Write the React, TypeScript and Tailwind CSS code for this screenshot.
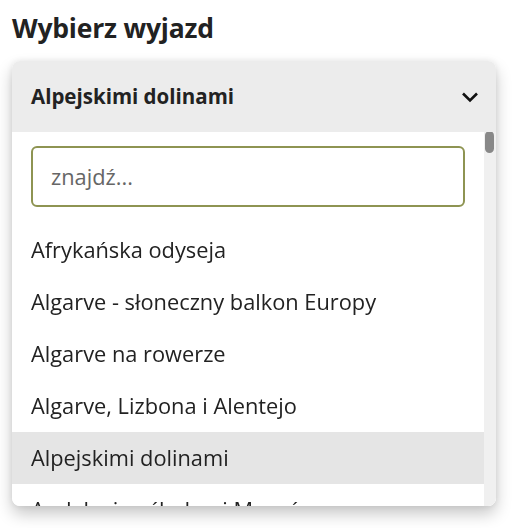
import { useState } from "react";

const trips = [
  "Afrykańska odyseja",
  "Algarve - słoneczny balkon Europy",
  "Algarve na rowerze",
  "Algarve, Lizbona i Alentejo",
  "Alpejskimi dolinami",
  "Andaluzja - śladami Maurów",
];

export default function App() {
  const [query, setQuery] = useState("");
  const selected = "Alpejskimi dolinami";

  return (
    <div className="min-h-screen bg-white px-3 pt-[10px] text-[#222] [font-family:'Open_Sans',sans-serif]">
      <h2 className="text-[26.5px] font-bold leading-[36px] tracking-[-0.2px]">Wybierz wyjazd</h2>

      <div className="mt-[15px] w-[484px] rounded-lg shadow-[0_8px_16px_rgba(0,0,0,0.22),0_0_6px_rgba(0,0,0,0.08)]">
        <button
          type="button"
          className="flex h-[71px] w-full items-center justify-between rounded-t-lg bg-[#ececec] pl-[19px] pr-[16px]"
        >
          <span className="text-[20.5px] font-bold">{selected}</span>
          <svg width="20" height="20" viewBox="0 0 20 20" fill="none" stroke="#111" strokeWidth="2.6">
            <path d="M3 6.5l7 7 7-7" />
          </svg>
        </button>

        <div className="flex h-[374px] overflow-hidden rounded-b-lg bg-white">
          <div className="flex-1">
            <div className="px-[19px] pb-[17px] pt-[14px]">
              <input
                autoFocus
                value={query}
                onChange={(e) => setQuery(e.target.value)}
                placeholder="znajdź..."
                className="h-[61px] w-full rounded-md border-2 border-[#8e9452] px-[18px] text-[21.8px] text-[#222] outline-none placeholder:text-[#666]"
              />
            </div>
            <ul>
              {trips.map((t) => (
                <li
                  key={t}
                  className={`flex h-[52px] items-center pl-[19px] text-[21.8px] ${t === selected ? "bg-[#e5e5e5]" : ""}`}
                >
                  {t}
                </li>
              ))}
            </ul>
          </div>
          <div className="w-[12px] bg-[#f0f0f0] pl-[1px] pr-[2px]">
            <div className="h-[22px] w-[9px] -translate-y-[1px] rounded-full bg-[#888]" />
          </div>
        </div>
      </div>
    </div>
  );
}
